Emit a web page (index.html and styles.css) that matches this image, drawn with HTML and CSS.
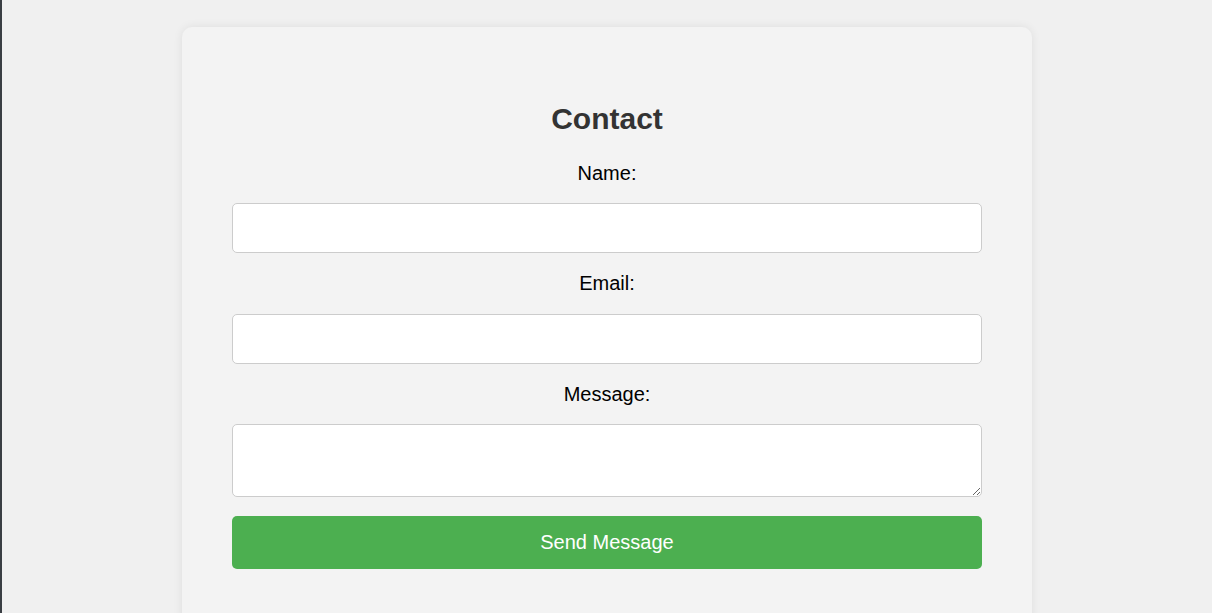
FILE: index.html
```html
<!DOCTYPE html>
<html lang="en">
<head>
<meta charset="utf-8">
<title>Contact</title>
<link rel="stylesheet" href="styles.css">
</head>
<body>
  <main class="page">
    <section class="card">
      <h2 class="title">Contact</h2>
      <form class="form">
        <label class="label" for="name">Name:</label>
        <input class="field" type="text" id="name">
        <label class="label" for="email">Email:</label>
        <input class="field" type="email" id="email">
        <label class="label" for="message">Message:</label>
        <textarea class="field area" id="message"></textarea>
        <button class="submit" type="button">Send Message</button>
      </form>
    </section>
  </main>
</body>
</html>
```

FILE: styles.css
```css
html {
  background: #f0f0f0;
  box-shadow: inset 2px 0 0 #3a3e44;
  min-height: 100%;
}

body {
  margin: 0;
  font-family: "Liberation Sans", Arial, sans-serif;
  font-size: 20px;
  color: #000;
}

.page {
  display: flex;
  justify-content: center;
  padding: 27px 0 0 2px;
}

.card {
  width: 850px;
  box-sizing: border-box;
  padding: 50px 50px 60px;
  background: #f3f3f3;
  border-radius: 10px;
  box-shadow: 0 0 10px rgba(0, 0, 0, 0.08);
}

.title {
  margin: 25px 0 25.5px;
  font-size: 30px;
  font-weight: bold;
  color: #333;
  text-align: center;
  line-height: 34px;
}

.form {
  display: flex;
  flex-direction: column;
}

.label {
  display: block;
  text-align: center;
  line-height: 23px;
  margin-bottom: 18.5px;
}

.field {
  display: block;
  box-sizing: border-box;
  width: 100%;
  height: 50px;
  margin: 0 0 19px;
  padding: 10px;
  border: 1px solid #ccc;
  border-radius: 5px;
  background: #fff;
  font-family: "Liberation Sans", Arial, sans-serif;
  font-size: 20px;
}

.area {
  height: 73px;
  margin-bottom: 19px;
  resize: vertical;
}

.submit {
  display: block;
  width: 100%;
  height: 53px;
  border: 0;
  border-radius: 5px;
  background: #4caf50;
  color: #fff;
  font-family: "Liberation Sans", Arial, sans-serif;
  font-size: 20px;
  cursor: pointer;
}
```
